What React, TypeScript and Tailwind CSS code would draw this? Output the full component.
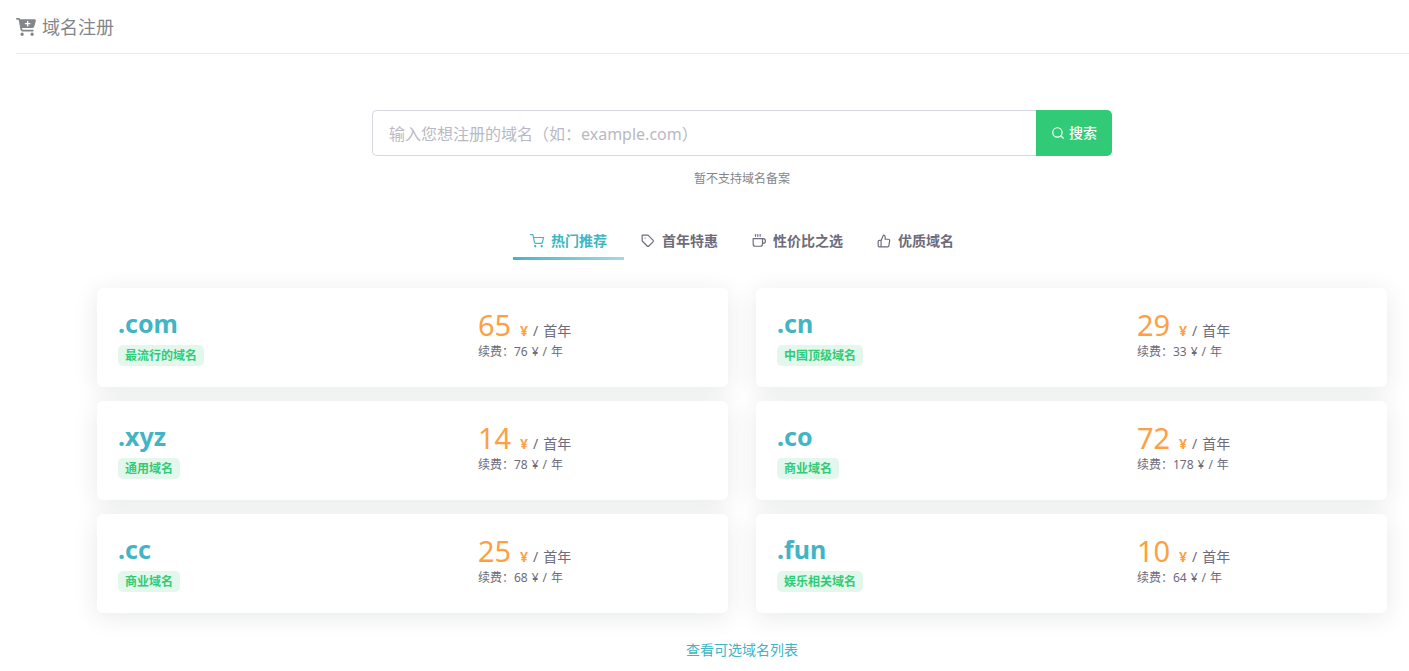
import { useState } from 'react';
import { FaCartPlus } from 'react-icons/fa6';
import { FiCoffee, FiSearch, FiShoppingCart, FiTag, FiThumbsUp } from 'react-icons/fi';

const tabs = [
  { id: 'hot', label: '热门推荐', icon: FiShoppingCart },
  { id: 'first-year', label: '首年特惠', icon: FiTag },
  { id: 'value', label: '性价比之选', icon: FiCoffee },
  { id: 'quality', label: '优质域名', icon: FiThumbsUp },
];

const domains = [
  { suffix: '.com', tag: '最流行的域名', price: 65, renew: 76 },
  { suffix: '.cn', tag: '中国顶级域名', price: 29, renew: 33 },
  { suffix: '.xyz', tag: '通用域名', price: 14, renew: 78 },
  { suffix: '.co', tag: '商业域名', price: 72, renew: 178 },
  { suffix: '.cc', tag: '商业域名', price: 25, renew: 68 },
  { suffix: '.fun', tag: '娱乐相关域名', price: 10, renew: 64 },
];

type Domain = (typeof domains)[number];

function DomainCard({ domain }: { domain: Domain }) {
  return (
    <li className="grid grid-cols-[7fr_5fr] rounded-md bg-white px-[7px] pt-[19px] pb-[21px] shadow-[0_4px_24px_rgba(34,41,47,0.1)]">
      <div className="px-[14px]">
        <h2 className="text-[25px] leading-8 font-bold text-[#41b5c4]">{domain.suffix}</h2>
        <span className="mt-[6px] block w-fit rounded-[5px] bg-[#e4f7ec] px-[7px] text-xs leading-[21px] font-bold text-[#31cb77]">
          {domain.tag}
        </span>
      </div>
      <div className="px-[14px] text-[#6e6b7b]">
        <p className="flex items-baseline gap-[5px] text-sm">
          <span className="mr-1 text-[29px] leading-[36px] text-[#ff9f43]">{domain.price}</span>
          <span className="font-bold text-[#ff9f43]">¥</span>
          <span>/</span>
          <span>首年</span>
        </p>
        <p className="flex gap-1 text-xs leading-[18px]">
          <span>续费：{domain.renew}</span>
          <span>¥</span>
          <span>/</span>
          <span>年</span>
        </p>
      </div>
    </li>
  );
}

export default function App() {
  const [activeTab, setActiveTab] = useState('hot');

  return (
    <div className="min-h-screen bg-white pl-4 font-['Noto_Sans','Noto_Sans_CJK_SC',sans-serif] text-[#6e6b7b]">
      <header className="flex items-center gap-[6px] border-b border-[#ebe9f1] pt-3 pb-[11px] text-[#82868b]">
        <FaCartPlus className="h-[18px] w-5" />
        <h1 className="text-lg leading-[30px]">域名注册</h1>
      </header>

      <main className="pt-14 pr-[22px] pl-[81px]">
        <form className="mx-auto flex max-w-[740px]" onSubmit={(e) => e.preventDefault()}>
          <input
            type="text"
            aria-label="域名"
            placeholder="输入您想注册的域名（如：example.com）"
            className="h-[46px] min-w-0 flex-1 rounded-l-[5px] border border-r-0 border-[#d8d6de] px-4 pt-[2px] text-base outline-none placeholder:text-[#b9b9c3]"
          />
          <button
            type="submit"
            className="flex items-center gap-1 rounded-r-[5px] bg-[#31cb77] px-[15px] text-sm font-medium text-white"
          >
            <FiSearch className="size-[14px]" />
            搜索
          </button>
        </form>
        <p className="mt-[14px] text-center text-xs leading-[18px] text-[#82868b]">暂不支持域名备案</p>

        <div role="tablist" className="mt-[37px] flex justify-center">
          {tabs.map(({ id, label, icon: Icon }) => (
            <button
              key={id}
              type="button"
              role="tab"
              aria-selected={id === activeTab}
              onClick={() => setActiveTab(id)}
              className={
                id === activeTab
                  ? 'flex flex-col text-sm font-bold text-[#41b5c4]'
                  : 'flex flex-col text-sm font-bold text-[#6e6b7b]'
              }
            >
              <span className="flex h-8 items-center gap-[7px] px-[17px]">
                <Icon className="size-[14px]" />
                {label}
              </span>
              {id === activeTab && <span className="h-[3px] w-full bg-linear-to-r from-[#41b5c4] to-[#a0dae1]" />}
            </button>
          ))}
        </div>

        <ul className="mt-7 grid grid-cols-2 gap-x-7 gap-y-[14px]">
          {domains.map((d) => (
            <DomainCard key={d.suffix} domain={d} />
          ))}
        </ul>

        <div className="mt-[27px] pb-2 text-center text-sm leading-5">
          <a href="#domains" className="text-[#41b5c4]">查看可选域名列表</a>
        </div>
      </main>
    </div>
  );
}
